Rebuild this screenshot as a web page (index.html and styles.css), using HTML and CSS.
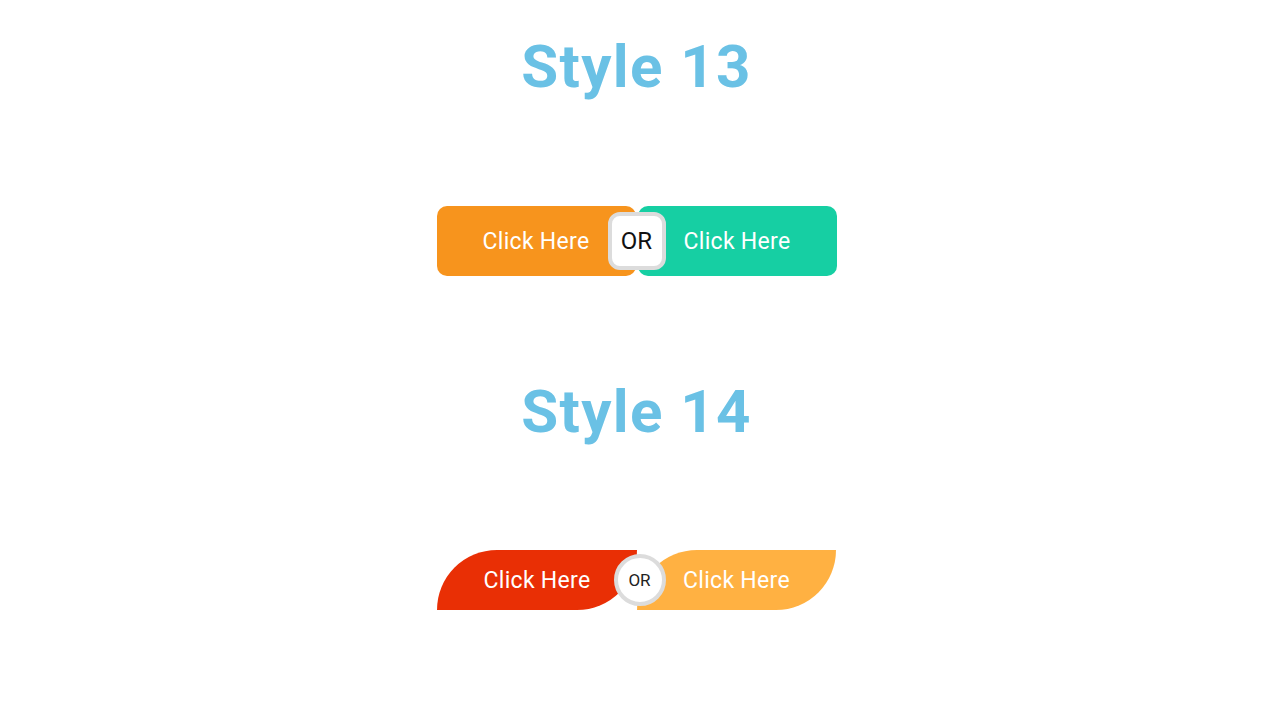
FILE: index.html
```html
<!DOCTYPE html>
<html>
<head>
<meta charset="utf-8">
<title>Buttons</title>
<link rel="stylesheet" href="styles.css">
</head>
<body>
<div class="page">
  <section class="block block-13">
    <h2 class="title">Style 13</h2>
    <div class="group">
      <a class="btn btn-13 orange">Click Here</a>
      <a class="btn btn-13 teal">Click Here</a>
      <span class="or or-13">OR</span>
    </div>
  </section>
  <section class="block block-14">
    <h2 class="title">Style 14</h2>
    <div class="group">
      <a class="btn btn-14 red">Click Here</a>
      <a class="btn btn-14 amber">Click Here</a>
      <span class="or or-14">OR</span>
    </div>
  </section>
</div>
</body>
</html>
```

FILE: styles.css
```css
html, body {
  margin: 0;
  padding: 0;
  background: #ffffff;
}
body {
  font-family: Roboto, "Liberation Sans", Arial, sans-serif;
}
.page {
  display: flex;
  flex-direction: column;
  align-items: center;
  padding-top: 32px;
  padding-right: 7px;
}
.block {
  display: flex;
  flex-direction: column;
  align-items: center;
}
.block-14 {
  margin-top: 101px;
}
.title {
  margin: 0;
  font-size: 60px;
  line-height: 70px;
  font-weight: 700;
  letter-spacing: 1.4px;
  color: #6ac1e5;
}
.group {
  position: relative;
  display: flex;
  gap: 2px;
  margin-top: 104px;
}
.block-14 .group {
  margin-top: 103px;
  gap: 0;
}
.btn {
  display: flex;
  align-items: center;
  justify-content: center;
  width: 199px;
  color: #ffffff;
  font-size: 23px;
  letter-spacing: 0.3px;
  text-decoration: none;
}
.btn-13 {
  height: 70px;
  border-radius: 10px;
}
.btn-14 {
  height: 60px;
  border-radius: 60px 0;
}
.btn-14.red { width: 200px; }
.btn-14.amber { width: 199px; }
.orange { background: #f7941d; }
.teal { background: #16cfa3; }
.red { background: #e92f05; }
.amber { background: #ffb142; }
.or {
  position: absolute;
  top: 50%;
  left: 50%;
  transform: translate(-50%, -50%);
  display: flex;
  align-items: center;
  justify-content: center;
  box-sizing: border-box;
  background: #ffffff;
  border: 4px solid #dcdcdc;
}
.or-13 {
  width: 58px;
  height: 58px;
  border-radius: 12px;
  font-size: 24px;
  color: #111111;
}
.or-14 {
  width: 52px;
  height: 52px;
  border-radius: 50%;
  font-size: 17px;
  color: #222222;
  margin-left: 3px;
}
```
